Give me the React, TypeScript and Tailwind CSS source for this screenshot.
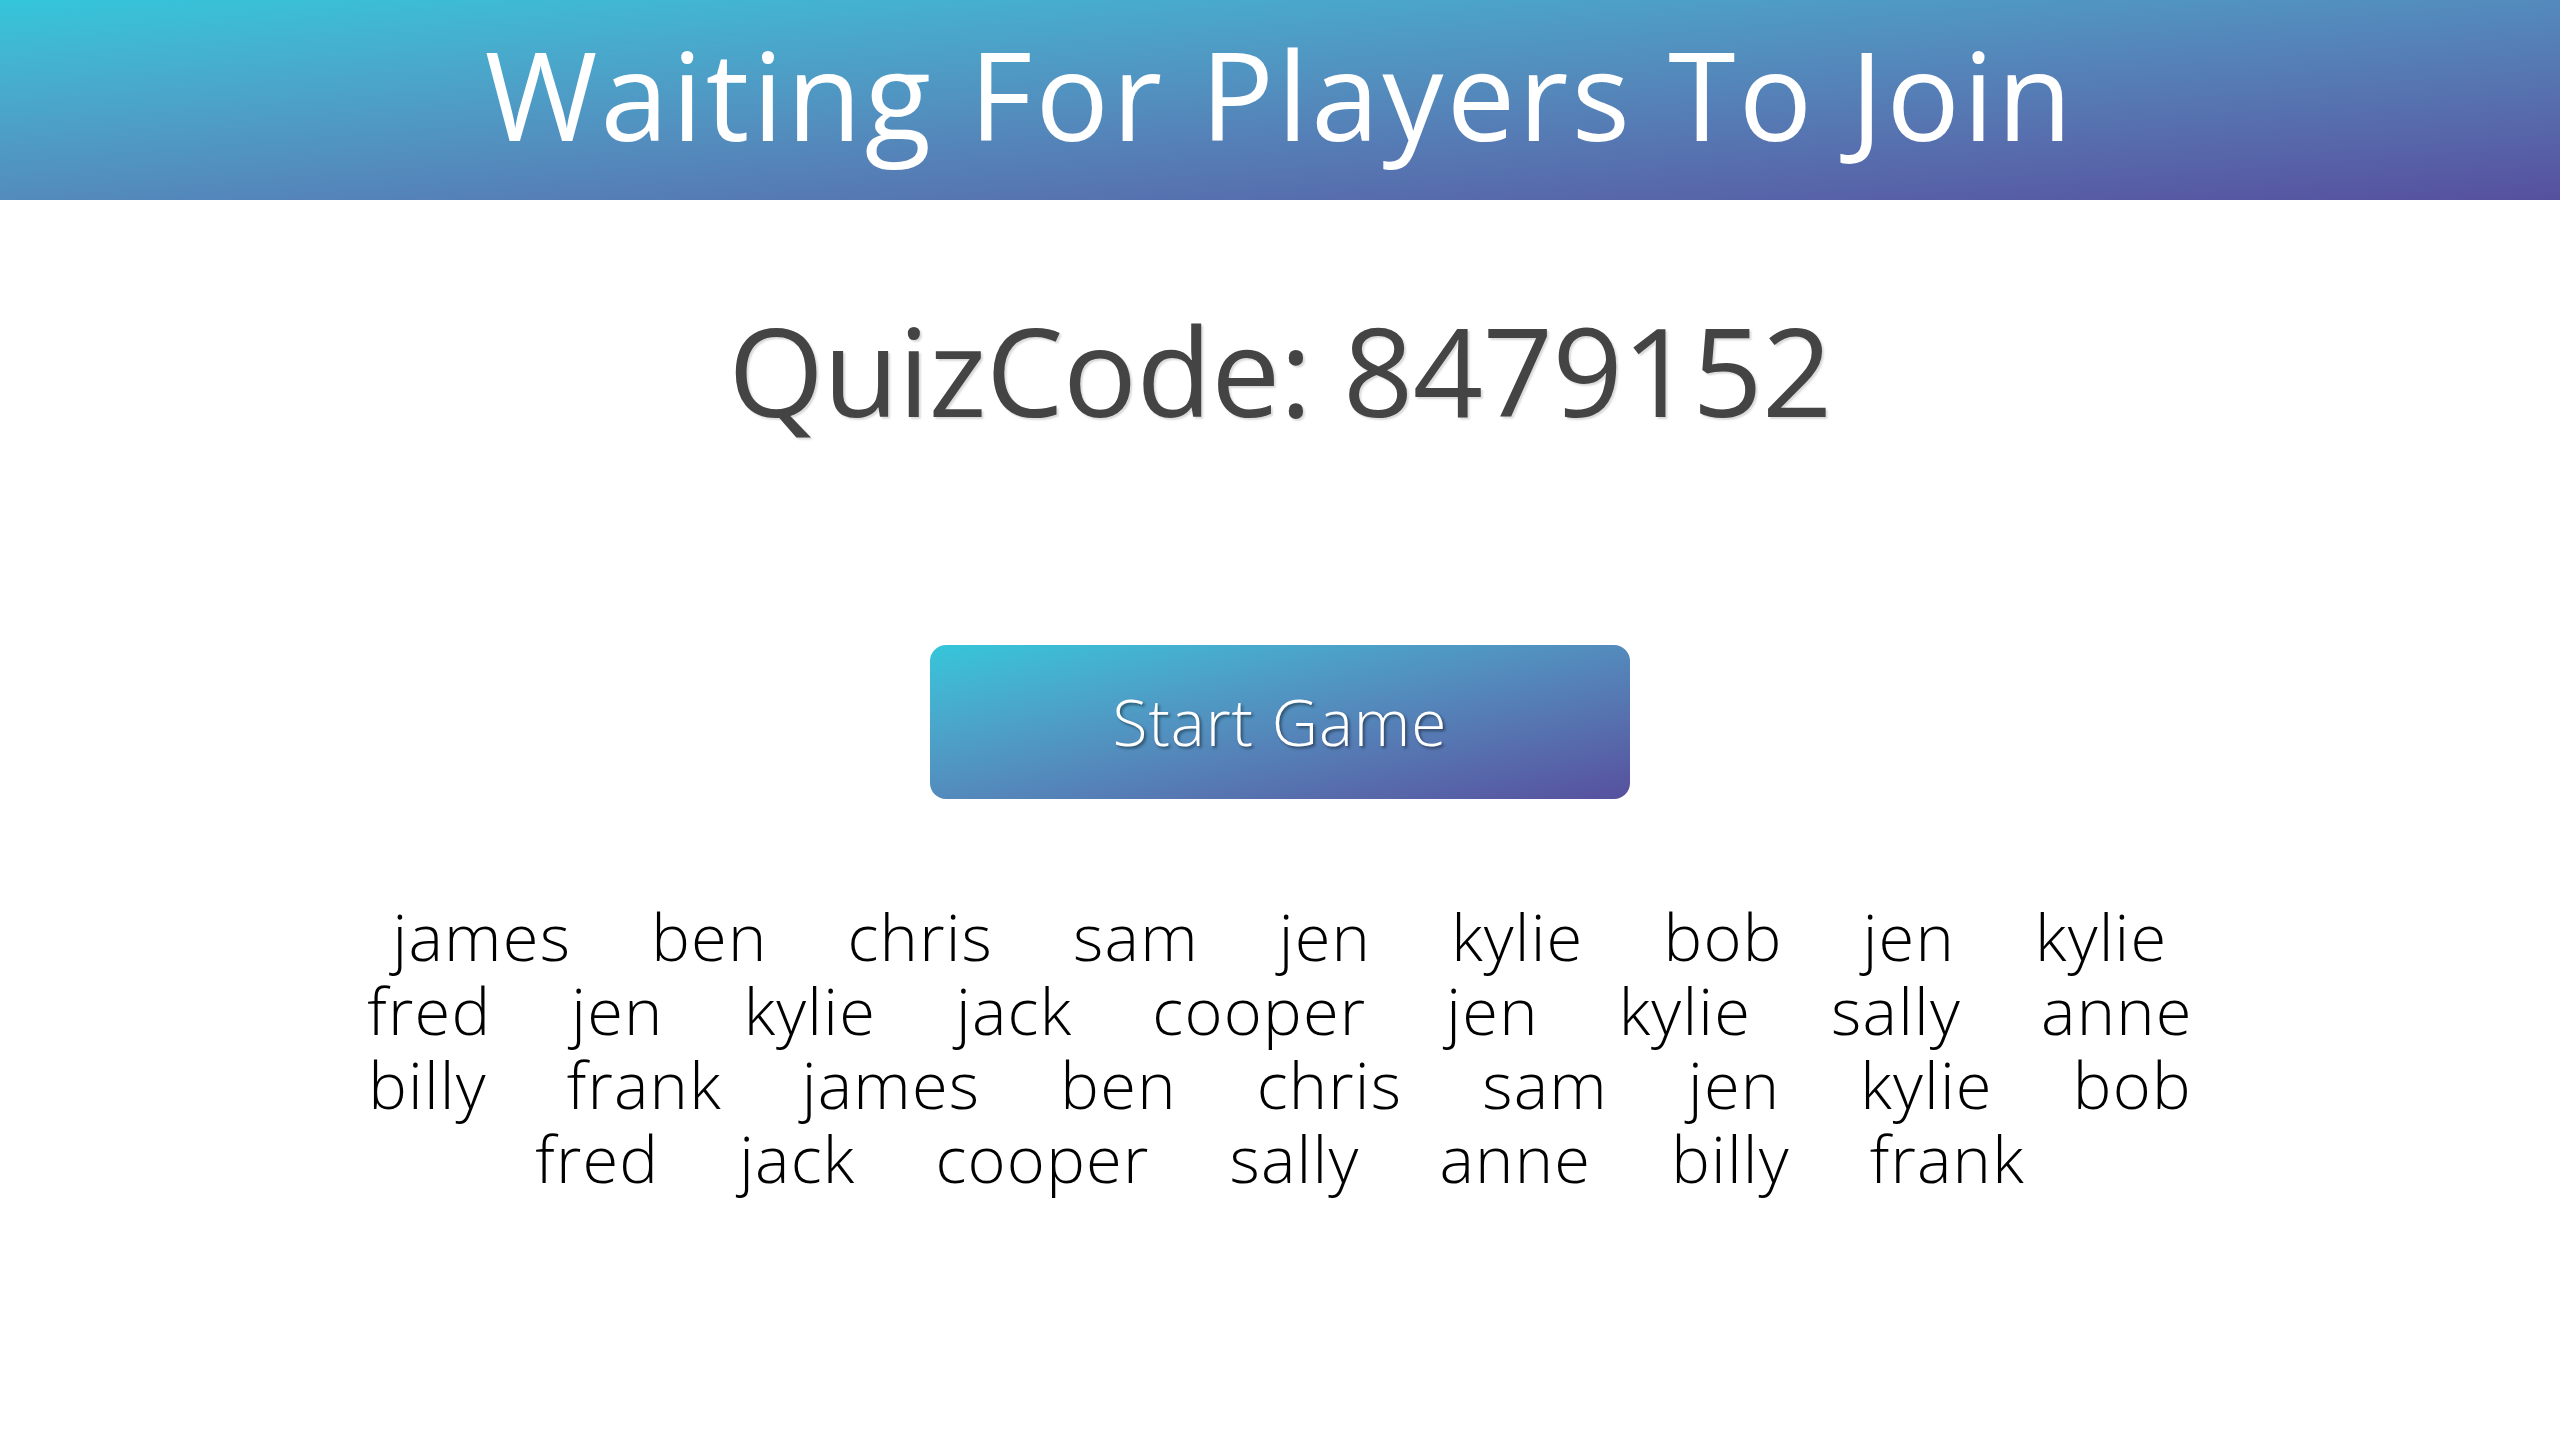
import React from 'react';

const players = [
  'james', 'ben', 'chris', 'sam', 'jen', 'kylie', 'bob', 'jen', 'kylie',
  'fred', 'jen', 'kylie', 'jack', 'cooper', 'jen', 'kylie', 'sally', 'anne',
  'billy', 'frank', 'james', 'ben', 'chris', 'sam', 'jen', 'kylie', 'bob',
  'fred', 'jack', 'cooper', 'sally', 'anne', 'billy', 'frank',
];

const font = "font-['Open_Sans','Liberation_Sans',sans-serif]";

const App: React.FC = () => {
  const quizCode = 8479152;

  return (
    <div className={`min-h-screen bg-white ${font}`}>
      <header className="h-[200px] flex items-center justify-center bg-linear-to-br from-[#33c6da] to-[#56509e]">
        <h1 className="text-white text-[122px] leading-none font-normal tracking-[3.3px] pb-[12px]">
          Waiting For Players To Join
        </h1>
      </header>

      <div className="flex flex-col items-center">
        <h2 className="mt-[108px] text-[#444] text-[123px] leading-none font-normal tracking-[-0.5px] [text-shadow:2px_2px_2px_rgba(0,0,0,0.15)]">
          QuizCode: {quizCode}
        </h2>

        <button className="mt-[214px] w-[700px] h-[154px] rounded-[16px] bg-linear-to-br from-[#33c6da] to-[#56509e] text-white text-[64px] font-light tracking-[1px] [text-shadow:2px_2px_3px_rgba(0,0,0,0.45)]">
          Start Game
        </button>

        <div className="mt-[100px] w-[1920px] flex flex-wrap justify-center text-black text-[65px] font-light tracking-[1.2px] leading-[74px]">
          {players.map((name, i) => (
            <span key={i} className="mx-[40px]">
              {name}
            </span>
          ))}
        </div>
      </div>
    </div>
  );
};

export default App;
